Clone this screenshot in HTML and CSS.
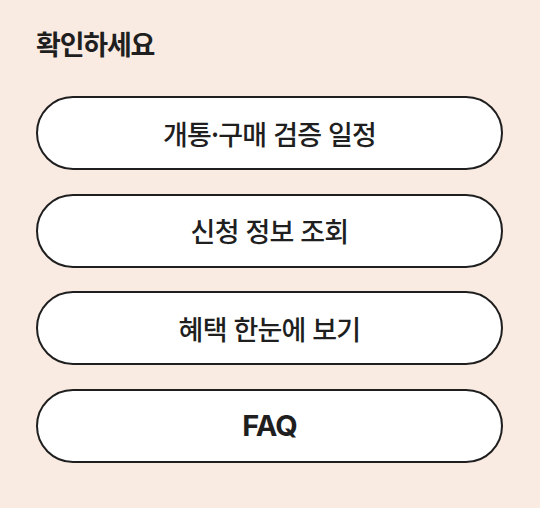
FILE: index.html
```html
<!DOCTYPE html>
<html lang="ko">
<head>
    <meta charset="UTF-8">
    <title>확인하세요</title>
    <meta name="viewport" content="width=device-width, initial-scale=1.0">
    <link rel="stylesheet" href="styles.css">
</head>
<body>
    <section class="check">
        <h2 class="check-title">확인하세요</h2>
        <div class="check-list">
            <a href="#" class="check-btn">개통·구매 검증 일정</a>
            <a href="#" class="check-btn">신청 정보 조회</a>
            <a href="#" class="check-btn">혜택 한눈에 보기</a>
            <a href="#" class="check-btn check-btn-en">FAQ</a>
        </div>
    </section>
</body>
</html>
```

FILE: styles.css
```css
:root {
    --bg-peach: #faebe2;
    --ink: #1f1f1f;
}

html, body {
    margin: 0;
    padding: 0;
}

body {
    background: var(--bg-peach);
    color: var(--ink);
    font-family: 'Noto Sans CJK KR', 'Noto Sans', sans-serif;
    min-height: 508px;
}

.check {
    padding: 28px 37px 0 36px;
}

.check-title {
    margin: 0 0 36px;
    font-size: 27px;
    font-weight: 700;
    line-height: 32px;
    letter-spacing: -1.2px;
}

.check-list {
    display: flex;
    flex-direction: column;
    gap: 23.5px;
}

.check-btn {
    display: flex;
    align-items: center;
    justify-content: center;
    height: 74px;
    box-sizing: border-box;
    border: 2px solid var(--ink);
    border-radius: 37px;
    background: #fff;
    color: var(--ink);
    text-decoration: none;
    font-size: 27px;
    font-weight: 500;
    letter-spacing: -0.8px;
}

.check-btn-en {
    font-family: 'Inter', 'Noto Sans', sans-serif;
    font-size: 29px;
    font-weight: 700;
    letter-spacing: -1px;
}
```
